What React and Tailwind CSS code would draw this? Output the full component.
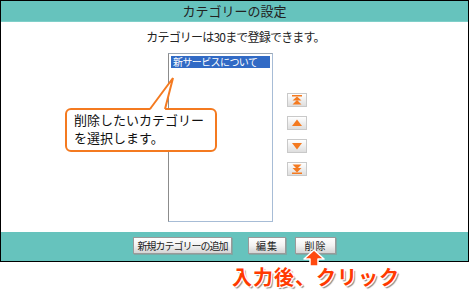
const jp = { fontFamily: '"Noto Sans CJK JP", "Liberation Sans", sans-serif' };

function ArrowBtn({ kind }) {
  return (
    <button className="w-[20px] h-[14px] border border-[#c9c9c9] bg-gradient-to-b from-white to-[#dedede] flex items-center justify-center">
      <svg width="12" height="10" viewBox="0 0 12 10">
        {kind === "top" && (
          <g fill="#f47a20">
            <rect x="1" y="0" width="10" height="1.5" />
            <polygon points="6,1.5 10.5,5.5 1.5,5.5" />
            <polygon points="6,5 10.5,9.5 1.5,9.5" />
          </g>
        )}
        {kind === "up" && <polygon points="6,1.5 11,8 1,8" fill="#f47a20" />}
        {kind === "down" && <polygon points="1,2 11,2 6,8.5" fill="#f47a20" />}
        {kind === "bottom" && (
          <g fill="#f47a20">
            <polygon points="1.5,0.5 10.5,0.5 6,5" />
            <polygon points="1.5,4 10.5,4 6,8.5" />
            <rect x="1" y="8.5" width="10" height="1.5" />
          </g>
        )}
      </svg>
    </button>
  );
}

function FootBtn({ children, className = "" }) {
  return (
    <button
      className={`h-[17px] border border-[#9a9a9a] bg-gradient-to-b from-white via-[#f2f2f2] to-[#d4d4d4] text-[10px] leading-none text-[#222] whitespace-nowrap shadow-[1px_1px_0_#7aa9a5] flex items-center justify-center ${className}`}
      style={jp}
    >
      {children}
    </button>
  );
}

export default function App() {
  return (
    <div className="relative w-[470px] h-[296px] bg-white" style={jp}>
      <div className="w-[469px] h-[262px] border border-black flex flex-col">
        <div className="h-[21px] bg-[#66c3bd] border-b border-[#7fcfc9] flex items-center justify-center text-[13px] text-[#222]">
          カテゴリーの設定
        </div>

        <div className="flex-1 flex flex-col">
          <div className="pt-[5px] h-[31px] pl-[2px] text-center text-[12px] tracking-[-0.8px] text-[#222] leading-[20px]">
            カテゴリーは30まで登録できます。
          </div>
          <div className="flex pl-[167px]">
            <div className="w-[105px] h-[169px] border border-[#a7bcd6] border-l-[#8c8c8c] border-t-[#9aa6b4] p-[2px]">
              <div className="h-[12px] bg-[#316ac5] text-white text-[10px] tracking-[-0.6px] leading-[12px] pl-[2px] whitespace-nowrap">
                新サービスについて
              </div>
            </div>
            <div className="ml-[14px] pt-[40px] flex flex-col gap-[9px]">
              <ArrowBtn kind="top" />
              <ArrowBtn kind="up" />
              <ArrowBtn kind="down" />
              <ArrowBtn kind="bottom" />
            </div>
          </div>
        </div>

        <div className="h-[29px] bg-[#66c3bd] flex items-start pt-[5px] pl-[132px]">
          <FootBtn className="w-[99px] tracking-[-1px]">新規カテゴリーの追加</FootBtn>
          <FootBtn className="w-[38px] ml-[16px] tracking-[1px]">編集</FootBtn>
          <FootBtn className="w-[41px] ml-[9px] tracking-[1px]">削除</FootBtn>
        </div>
      </div>

      {/* callout bubble */}
      <div className="absolute left-[65px] top-[108px] w-[152px] h-[44px] border-2 border-[#f47a20] rounded-[6px] bg-white pl-[7px] pt-[1px] text-[13px] text-[#111]">
        <div className="leading-[18px]">削除したいカテゴリー</div>
        <div className="leading-[18px]">を選択します。</div>
      </div>
      <svg className="absolute left-[140px] top-[76px]" width="40" height="36" viewBox="0 0 40 36">
        <polygon points="10,34 33,2 25,34" fill="white" />
        <polyline points="10,33 33,2 25,33" fill="none" stroke="#f47a20" strokeWidth="2" strokeLinejoin="miter" />
      </svg>

      {/* annotation */}
      <svg className="absolute left-[303px] top-[249px]" width="22" height="18" viewBox="0 0 22 18">
        <polygon points="11,1 21,10 15,10 15,17 7,17 7,10 1,10" fill="#ff4a10" stroke="white" strokeWidth="1.5" strokeLinejoin="round" />
      </svg>
      <div
        className="absolute left-[232px] top-[264px] text-[20px] font-bold text-[#ff3a00] leading-[26px] tracking-[1px] whitespace-nowrap"
        style={{ textShadow: "1px 1px 0 #fff, -1px -1px 0 #fff, 1px -1px 0 #fff, -1px 1px 0 #fff, 2px 2px 1px #888" }}
      >
        入力後、クリック
      </div>
    </div>
  );
}
